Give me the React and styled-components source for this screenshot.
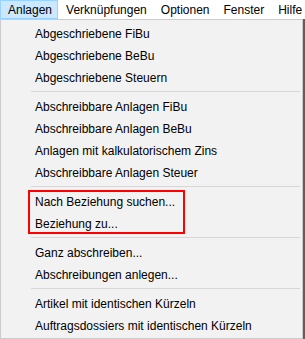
import React from 'react';
import styled, { createGlobalStyle } from 'styled-components';

const GlobalStyle = createGlobalStyle`
  html, body {
    margin: 0;
    padding: 0;
    background: #ffffff;
  }
  body {
    font-family: "Liberation Sans", Arial, sans-serif;
    font-size: 12px;
    color: #000;
  }
`;

const Window = styled.div`
  width: 305px;
  height: 339px;
  display: flex;
  flex-direction: column;
  overflow: hidden;
`;

const MenuBar = styled.div`
  display: flex;
  flex-direction: row;
  height: 19px;
  background: #ffffff;
`;

const BarItem = styled.div`
  display: flex;
  align-items: center;
  padding: 0 5px 0 7px;
  height: 17px;
  border: 1px solid ${p => (p.$open ? '#99d1ff' : 'transparent')};
  background: ${p => (p.$open ? '#cce8ff' : 'transparent')};
  white-space: nowrap;
`;

const Below = styled.div`
  flex: 1;
  display: flex;
  flex-direction: row;
`;

const Dropdown = styled.div`
  width: 301px;
  background: #f2f2f2;
  border: 1px solid #cccccc;
  padding: 2px 0;
  display: flex;
  flex-direction: column;
`;

const Backdrop = styled.div`
  flex: 1;
  background: #5f5f5f;
`;

const Item = styled.div`
  height: 22px;
  display: flex;
  align-items: center;
  padding-left: 34px;
  padding-top: 1px;
  box-sizing: border-box;
  white-space: nowrap;
`;

const Separator = styled.div`
  height: 1px;
  margin: 3px 2px 3px 30px;
  background: #d7d7d7;
`;

const Group = styled.div`
  position: relative;
`;

const Highlight = styled.div`
  position: absolute;
  left: 27px;
  top: 0;
  width: 153px;
  height: 40px;
  border: 2px solid #ff0000;
  pointer-events: none;
`;

const sections = [
  ['Abgeschriebene FiBu', 'Abgeschriebene BeBu', 'Abgeschriebene Steuern'],
  [
    'Abschreibbare Anlagen FiBu',
    'Abschreibbare Anlagen BeBu',
    'Anlagen mit kalkulatorischem Zins',
    'Abschreibbare Anlagen Steuer',
  ],
  ['Nach Beziehung suchen...', 'Beziehung zu...'],
  ['Ganz abschreiben...', 'Abschreibungen anlegen...'],
  ['Artikel mit identischen Kürzeln', 'Auftragsdossiers mit identischen Kürzeln'],
];

function App() {
  return (
    <Window>
      <GlobalStyle />
      <MenuBar>
        <BarItem $open>Anlagen</BarItem>
        <BarItem>Verknüpfungen</BarItem>
        <BarItem>Optionen</BarItem>
        <BarItem>Fenster</BarItem>
        <BarItem>Hilfe</BarItem>
      </MenuBar>
      <Below>
        <Dropdown>
          {sections.map((items, i) => (
            <React.Fragment key={i}>
              {i > 0 && <Separator />}
              {i === 2 ? (
                <Group>
                  {items.map(t => <Item key={t}>{t}</Item>)}
                  <Highlight />
                </Group>
              ) : (
                items.map(t => <Item key={t}>{t}</Item>)
              )}
            </React.Fragment>
          ))}
        </Dropdown>
        <Backdrop />
      </Below>
    </Window>
  );
}

export default App;
